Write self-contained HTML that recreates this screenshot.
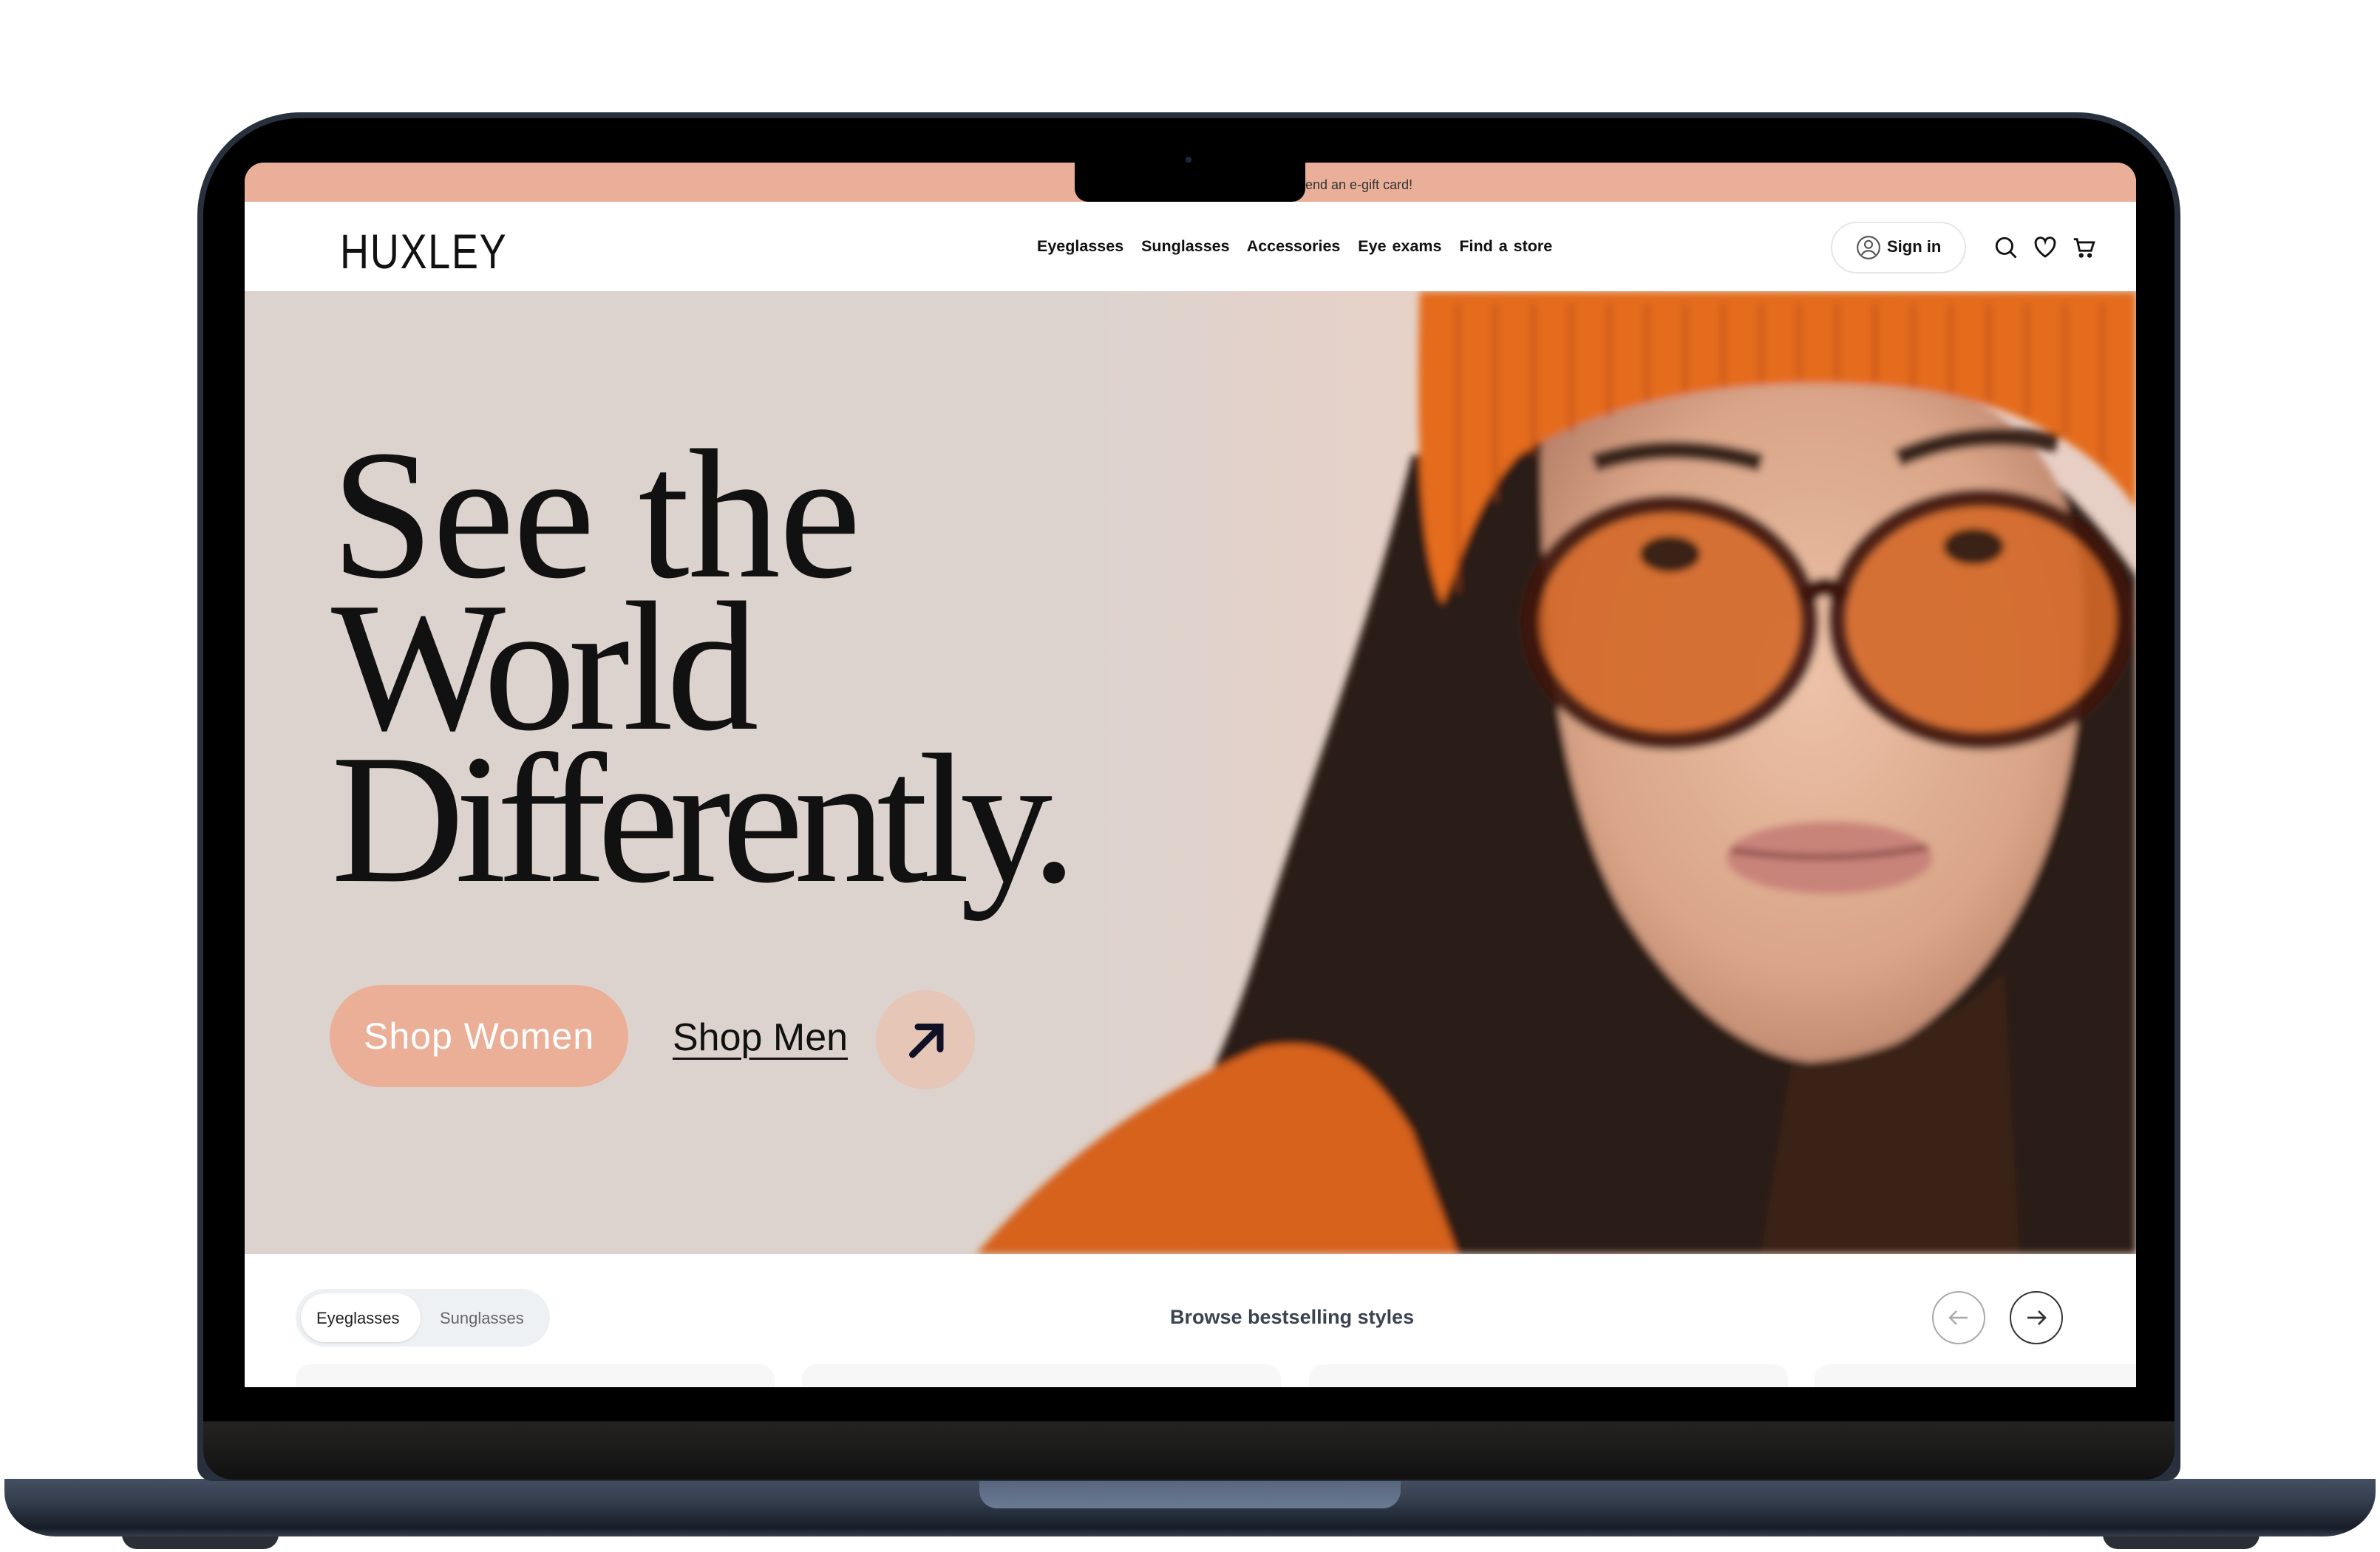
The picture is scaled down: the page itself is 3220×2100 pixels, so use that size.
<!DOCTYPE html>
<html><head><meta charset="utf-8"><style>
*{margin:0;padding:0;box-sizing:border-box}
body{width:3220px;height:2100px;background:#fff;position:relative;overflow:hidden;font-family:"Liberation Sans",sans-serif}
.abs{position:absolute}
</style></head><body>
<!-- base -->
<div class="abs" style="left:165px;top:2070px;width:212px;height:26px;background:#2a2f36;border-radius:0 0 20px 20px"></div>
<div class="abs" style="left:2845px;top:2070px;width:212px;height:26px;background:#2a2f36;border-radius:0 0 20px 20px"></div>
<div class="abs" style="left:6px;top:2001px;width:3208px;height:78px;border-radius:0 0 70px 70px / 0 0 60px 60px;background:linear-gradient(#444f61 0%,#333d4c 40%,#232b38 65%,#171d27 85%,#353e4d 100%)"></div>
<div class="abs" style="left:1325px;top:2001px;width:570px;height:40px;border-radius:0 0 24px 24px;background:linear-gradient(#56657c,#6a7a93)"></div>
<!-- lid -->
<div class="abs" style="left:267px;top:152px;width:2683px;height:1852px;border-radius:140px 140px 20px 20px;background:#27303c"></div>
<div class="abs" style="left:275px;top:160px;width:2667px;height:1842px;border-radius:132px 132px 40px 40px;background:linear-gradient(#000 0%,#000 95.7%,#242322 95.75%,#111 100%)"></div>
<!-- screen -->
<div class="abs" style="left:331px;top:220px;width:2559px;height:1657px;overflow:hidden;border-radius:26px 26px 0 0;background:#fff">
  <div class="abs" style="left:0;top:0;width:2559px;height:53px;background:#eaaf99"></div>
  <div class="abs" style="left:1435px;top:20px;font-size:18px;color:#333">end an e-gift card!</div>
  <div class="abs" style="left:129px;top:82px;font-family:'Liberation Sans Narrow','Liberation Sans',sans-serif;font-size:66px;font-weight:300;letter-spacing:2px;color:#111;transform:scaleX(0.82);transform-origin:left">HUXLEY</div>
  <div class="abs" style="left:1072px;top:101px;font-size:21.5px;font-weight:bold;color:#111;word-spacing:2px;white-space:nowrap">Eyeglasses&nbsp;&nbsp; Sunglasses&nbsp;&nbsp; Accessories&nbsp;&nbsp; Eye exams&nbsp;&nbsp; Find a store</div>
  <div class="abs" style="left:2146px;top:80px;width:183px;height:70px;border:2px solid #e4e6e9;border-radius:35px"></div>
  <svg class="abs" style="left:2180px;top:98px" width="34" height="34" viewBox="0 0 24 24" fill="none" stroke="#555" stroke-width="1.5"><circle cx="12" cy="12" r="10.5"/><circle cx="12" cy="9" r="3.5"/><path d="M5.5 19c1.5-3 4-4 6.5-4s5 1 6.5 4"/></svg>
  <div class="abs" style="left:2222px;top:101px;font-size:22px;font-weight:bold;color:#111">Sign in</div>
  <svg class="abs" style="left:2366px;top:98px" width="34" height="34" viewBox="0 0 24 24" fill="none" stroke="#111" stroke-width="2"><circle cx="10.5" cy="10.5" r="7.5"/><path d="M16 16l5.5 5.5"/></svg>
  <svg class="abs" style="left:2419px;top:98px" width="34" height="34" viewBox="0 0 24 24" fill="none" stroke="#111" stroke-width="2"><path d="M12 20.5S3 14.5 3 8.5A4.5 4.5 0 0 1 12 6a4.5 4.5 0 0 1 9 2.5c0 6-9 12-9 12z"/></svg>
  <svg class="abs" style="left:2472px;top:98px" width="34" height="34" viewBox="0 0 24 24" fill="none" stroke="#111" stroke-width="2"><path d="M2 4h3l2.5 11h11L21 7H6"/><circle cx="9" cy="19.5" r="1.2"/><circle cx="17" cy="19.5" r="1.2"/></svg>
  <!-- hero -->
  <div class="abs" style="left:0;top:174px;width:2559px;height:1303px;background:linear-gradient(90deg,#ddd3ce 0%,#ddd3ce 45%,#ecd1c5 70%,#e6cfc5 100%);overflow:hidden">
    <svg class="abs" style="left:0;top:0" width="2559" height="1303" viewBox="161 192 1246 634">
      <defs><filter id="b"><feGaussianBlur stdDeviation="2.5"/></filter>
      <radialGradient id="sk" cx="0.5" cy="0.45" r="0.6"><stop offset="0" stop-color="#ecc2a8"/><stop offset="0.7" stop-color="#d9a487"/><stop offset="1" stop-color="#b9826a"/></radialGradient></defs>
      <g filter="url(#b)">
      <path d="M930 300 C900 420 860 520 830 620 C800 720 760 790 700 826 L1407 826 L1407 380 C1380 340 1340 300 1300 280 L1000 290 Z" fill="#2a1b14"/>
      <path d="M1015 300 C1015 260 1080 245 1195 245 C1300 245 1360 280 1372 380 C1378 500 1345 600 1290 655 C1255 690 1225 702 1195 700 C1150 696 1105 660 1068 600 C1030 530 1015 430 1015 300 Z" fill="url(#sk)"/>
      <path d="M1180 700 C1230 700 1280 680 1320 640 L1330 826 L1160 826 Z" fill="#3a2418"/>
      <path d="M643 826 C700 760 760 720 830 690 C880 680 905 705 930 745 L960 826 Z" fill="#d6621b"/>
      <path d="M935 192 L1407 192 L1407 335 C1380 292 1320 262 1250 255 C1150 246 1060 262 1000 300 C972 330 962 370 950 398 C938 370 932 320 935 192 Z" fill="#e46c1f"/>
      <g stroke="#b8480f" stroke-width="3" opacity="0.6">
        <path d="M960 200V390M985 200V330M1010 200V300M1035 200V285M1060 200V275M1085 200V265M1110 200V258M1135 200V255M1160 200V252M1185 200V250M1210 200V250M1235 200V252M1260 200V256M1285 200V260M1310 200V266M1335 200V275M1360 200V287M1385 200V305"/>
      </g>
      <path d="M1050 305 Q1100 288 1160 305" stroke="#3a261c" stroke-width="12" fill="none"/>
      <path d="M1250 302 Q1300 280 1355 292" stroke="#3a261c" stroke-width="12" fill="none"/>
      <ellipse cx="1100" cy="410" rx="92" ry="78" fill="#d4692a" opacity="0.9" stroke="#3e140c" stroke-width="12"/>
      <ellipse cx="1305" cy="408" rx="95" ry="80" fill="#d4692a" opacity="0.9" stroke="#3e140c" stroke-width="12"/>
      <path d="M1188 395 Q1203 378 1214 395" stroke="#3e140c" stroke-width="12" fill="none"/>
      <ellipse cx="1100" cy="365" rx="20" ry="12" fill="#3b2417"/>
      <ellipse cx="1300" cy="360" rx="20" ry="12" fill="#3b2417"/>
      <ellipse cx="1205" cy="565" rx="68" ry="24" fill="#c9847a"/>
      <path d="M1140 560 Q1205 570 1270 558" stroke="#8a4c46" stroke-width="4" fill="none"/>
      </g>
    </svg>
    <div class="abs" style="left:117px;top:200px;font-family:'Liberation Serif',serif;font-size:250px;line-height:206px;color:#111;white-space:nowrap">
      <div style="letter-spacing:-2px">See the</div>
      <div style="letter-spacing:-10px">World</div>
      <div style="letter-spacing:-13px">Differently.</div>
    </div>
    <div class="abs" style="left:115px;top:939px;width:404px;height:138px;border-radius:69px;background:#ebaf98;color:#fff;font-size:50px;letter-spacing:1px;display:flex;align-items:center;justify-content:center">Shop Women</div>
    <div class="abs" style="left:579px;top:980px;font-size:52px;color:#111;text-decoration:underline;text-underline-offset:10px;text-decoration-thickness:3px">Shop Men</div>
    <div class="abs" style="left:854px;top:946px;width:134px;height:134px;border-radius:50%;background:#e5c6b7"></div>
    <svg class="abs" style="left:891px;top:983px" width="60" height="60" viewBox="0 0 24 24" fill="none" stroke="#111126" stroke-width="3.6" stroke-linecap="round"><path d="M5 20L19 6M8 5h12v12"/></svg>
  </div>
  <!-- bottom -->
  <div class="abs" style="left:69px;top:1524px;width:344px;height:78px;border-radius:39px;background:#eef1f4"></div>
  <div class="abs" style="left:76px;top:1530px;width:162px;height:66px;border-radius:33px;background:#fff;box-shadow:0 1px 3px rgba(0,0,0,.12)"></div>
  <div class="abs" style="left:97px;top:1551px;font-size:22px;color:#222">Eyeglasses</div>
  <div class="abs" style="left:264px;top:1551px;font-size:22px;color:#666">Sunglasses</div>
  <div class="abs" style="left:1252px;top:1547px;font-size:27px;font-weight:bold;color:#3b4350">Browse bestselling styles</div>
  <div class="abs" style="left:2283px;top:1527px;width:72px;height:72px;border-radius:50%;border:2px solid #aaa"></div>
  <div class="abs" style="left:2388px;top:1527px;width:72px;height:72px;border-radius:50%;border:2px solid #333"></div>
  <svg class="abs" style="left:2301px;top:1545px" width="36" height="36" viewBox="0 0 24 24" fill="none" stroke="#aaa" stroke-width="1.6"><path d="M20 12H4M10 6l-6 6 6 6"/></svg>
  <svg class="abs" style="left:2406px;top:1545px" width="36" height="36" viewBox="0 0 24 24" fill="none" stroke="#333" stroke-width="1.8"><path d="M4 12h16M14 6l6 6-6 6"/></svg>
  <div class="abs" style="left:69px;top:1626px;width:648px;height:80px;border-radius:20px;background:#f7f7f7"></div>
  <div class="abs" style="left:754px;top:1626px;width:648px;height:80px;border-radius:20px;background:#f7f7f7"></div>
  <div class="abs" style="left:1440px;top:1626px;width:648px;height:80px;border-radius:20px;background:#f7f7f7"></div>
  <div class="abs" style="left:2124px;top:1626px;width:648px;height:80px;border-radius:20px;background:#f7f7f7"></div>
</div>
<!-- notch -->
<div class="abs" style="left:1454px;top:210px;width:312px;height:63px;background:#000;border-radius:0 0 18px 18px"></div>
<div class="abs" style="left:1604px;top:212px;width:8px;height:8px;border-radius:50%;background:#1a2a44"></div>
</body></html>
